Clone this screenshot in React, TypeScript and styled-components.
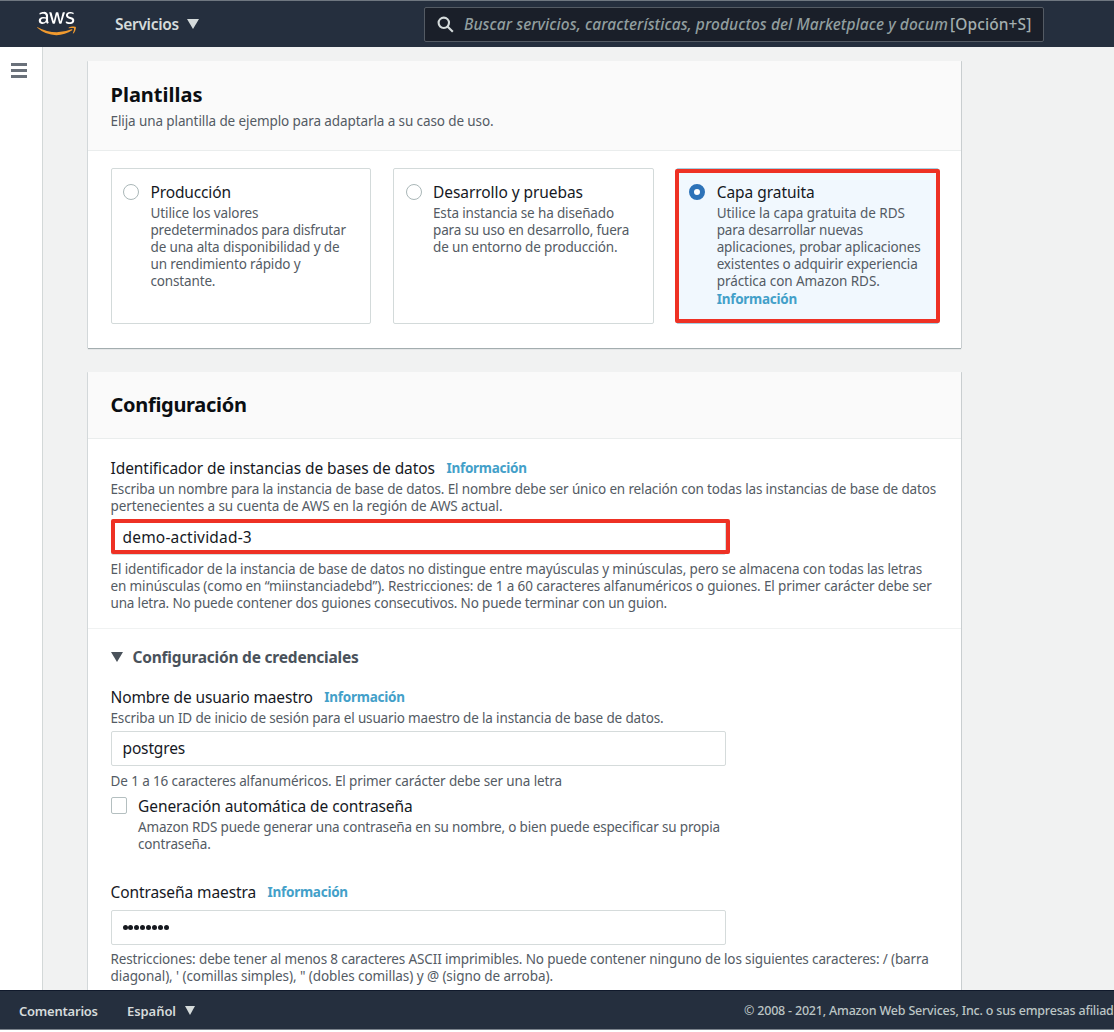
import React from "react";
import styled, { createGlobalStyle } from "styled-components";
import { FaAws } from "react-icons/fa6";

const GlobalStyle = createGlobalStyle`
  * { box-sizing: border-box; }
  body {
    margin: 0;
    background: #fff;
    font-family: "Noto Sans", "Open Sans", sans-serif;
    overflow: hidden;
  }
`;

const Page = styled.div`
  display: flex;
  flex-direction: column;
  width: 1114px;
  height: 1032px;
  overflow: hidden;
`;

const TopBar = styled.header`
  display: flex;
  align-items: center;
  flex: none;
  height: 47px;
  border-top: 1px solid #6f7780;
  background: #252f3e;
  color: #d5dbdb;
`;

const LogoBox = styled.div`
  width: 39px;
  height: 31px;
  margin: 0 0 1px 37px;
  svg { width: 39px; height: 31px; display: block; }
  svg path { fill: url(#awsInk); }
`;

const GradientDefs = styled.svg`
  width: 0;
  height: 0;
  flex: none;
`;

const Services = styled.div`
  display: flex;
  align-items: center;
  gap: 8px;
  width: 309px;
  margin-left: 39px;
  font-size: 15.5px;
  font-weight: 600;
  letter-spacing: -0.3px;
  line-height: 22px;
`;

const Caret = styled.i<{ $w: number; $h: number; $color: string }>`
  width: 0;
  height: 0;
  border-left: ${(p) => p.$w / 2}px solid transparent;
  border-right: ${(p) => p.$w / 2}px solid transparent;
  border-top: ${(p) => p.$h}px solid ${(p) => p.$color};
`;

const SearchBox = styled.div`
  display: flex;
  align-items: center;
  width: 620px;
  height: 35px;
  padding: 0 11px 0 12px;
  border: 1px solid #545b64;
  border-radius: 2px;
  background: #1a1f29;
  font-size: 15.5px;
  line-height: 22px;
  font-weight: 500;
  color: #a3aeaf;
  white-space: nowrap;
`;

const SearchGlyph = styled.svg`
  flex: none;
  width: 17px;
  height: 17px;
  margin-right: 10px;
`;

const Placeholder = styled.span`
  width: 486px;
  overflow: hidden;
  font-style: italic;
  letter-spacing: 0.067px;
  color: #919e9f;
`;

const Shortcut = styled.span`
  letter-spacing: 0.1px;
`;

const Middle = styled.div`
  display: flex;
  flex: none;
  height: 943px;
  background: #f1f2f2;
  overflow: hidden;
`;

const Rail = styled.nav`
  width: 43px;
  flex: none;
  background: #fff;
  border-right: 1px solid #d3d8d8;
  padding: 16px 0 0 11px;
`;

const Burger = styled.div`
  display: flex;
  flex-direction: column;
  gap: 3.5px;
  width: 16px;
  span { height: 2.5px; background: #6a717a; }
`;

const Content = styled.main`
  display: flex;
  flex-direction: column;
  gap: 24px;
  width: 873px;
  margin: 14px 0 0 44.5px;
`;

const Card = styled.section<{ $padBottom?: number }>`
  flex: none;
  padding-bottom: ${(p) => p.$padBottom ?? 0}px;
  background: #fff;
  box-shadow: 0 1px 1px #a3adaf, -1px 0 0 #dde1e2, 1px 0 0 #d0d5d6;
`;

const CardHeader = styled.div<{ $height: number; $top: number }>`
  display: flex;
  flex-direction: column;
  gap: 4px;
  height: ${(p) => p.$height}px;
  padding: ${(p) => p.$top}px 23px 0;
  background: #fafafa;
  border-bottom: 1px solid #eaeded;
`;

const Title = styled.h2<{ $ls?: number }>`
  margin: 0;
  font-size: 20px;
  line-height: 28px;
  font-weight: 700;
  color: #0b0e12;
  letter-spacing: ${(p) => p.$ls ?? 0}px;
`;

const Line = styled.div<{ $ls?: number }>`
  height: 17.2px;
  font-size: 13.5px;
  line-height: 17.2px;
  color: #545b64;
  white-space: nowrap;
  letter-spacing: ${(p) => p.$ls ?? -0.15}px;
`;

const Label = styled.div<{ $ls?: number }>`
  display: flex;
  align-items: center;
  gap: 11.5px;
  height: 22px;
  margin-bottom: 1.6px;
  font-size: 15.5px;
  line-height: 22px;
  color: #16191f;
  white-space: nowrap;
  letter-spacing: ${(p) => p.$ls ?? -0.1}px;
`;

const Info = styled.a`
  font-size: 13.5px;
  font-weight: 700;
  letter-spacing: -0.26px;
  color: #43a0c9;
`;

const Tiles = styled.div`
  display: grid;
  grid-template-columns: 260.5px 260.5px 263px;
  gap: 22px;
  height: 197px;
  padding: 17px 23px 24px;
`;

const Tile = styled.div<{ $selected?: boolean }>`
  position: relative;
  display: flex;
  gap: ${(p) => (p.$selected ? 12.2 : 11.4)}px;
  padding: 12px 0 0 ${(p) => (p.$selected ? 12 : 11.6)}px;
  border: 1px solid ${(p) => (p.$selected ? "#a5cfe2" : "#d3dada")};
  border-radius: 2px;
  background: ${(p) => (p.$selected ? "#f1f8fe" : "#fff")};
`;

const Radio = styled.span<{ $on?: boolean }>`
  flex: none;
  width: 16px;
  height: 16px;
  margin-top: 3px;
  border-radius: 50%;
  border: ${(p) => (p.$on ? "5px solid #2e73b8" : "1px solid #aab7b8")};
  background: #fff;
`;

const Highlight = styled.div<{ $box: string }>`
  position: absolute;
  inset: ${(p) => p.$box};
  border: 4px solid #ee3124;
  border-radius: 2px;
  pointer-events: none;
`;

const Section = styled.div<{ $top: number; $height?: number; $rule?: boolean }>`
  padding: ${(p) => p.$top}px 23px 0;
  height: ${(p) => (p.$height ? p.$height + "px" : "auto")};
  border-bottom: ${(p) => (p.$rule ? "1px solid #f0f2f2" : "none")};
`;

const Input = styled.div<{ $gapTop: number; $gapBottom: number; $ls: number }>`
  position: relative;
  width: 615px;
  height: 35px;
  margin: ${(p) => p.$gapTop}px 0 ${(p) => p.$gapBottom}px;
  padding-left: 11px;
  border: 1px solid #d5dbdb;
  border-radius: 2px;
  background: #fff;
  font-size: 15.5px;
  line-height: 32.6px;
  color: #16191f;
  letter-spacing: ${(p) => p.$ls}px;
`;

const Dots = styled.div`
  display: flex;
  align-items: center;
  gap: 0.9px;
  height: 33px;
  i { width: 5px; height: 5px; border-radius: 50%; background: #16191f; }
`;

const Expander = styled.div`
  display: flex;
  align-items: center;
  gap: 10px;
  height: 22px;
  margin-bottom: 18px;
  font-size: 15.5px;
  font-weight: 700;
  letter-spacing: -0.21px;
  color: #4a525b;
`;

const CheckRow = styled.div`
  display: flex;
  gap: 11.5px;
  margin: 5px 0 28.5px;
`;

const CheckBox = styled.span`
  flex: none;
  width: 16px;
  height: 17px;
  margin-top: 2px;
  border: 1px solid #b4bfc0;
  border-radius: 2px;
`;

const Footer = styled.footer`
  display: flex;
  align-items: center;
  flex: none;
  height: 40px;
  padding: 1px 0 0 19px;
  background: #252f3e;
  border-top: 1px solid #10192b;
  border-bottom: 1px solid #7a828b;
  font-size: 13px;
  font-weight: 600;
  line-height: 18px;
  color: #d5dbdb;
  white-space: nowrap;
  overflow: hidden;
`;

const FooterItem = styled.span<{ $w: number; $ls: number }>`
  display: flex;
  align-items: center;
  gap: 9px;
  flex: none;
  width: ${(p) => p.$w}px;
  letter-spacing: ${(p) => p.$ls}px;
`;

const Legal = styled.span`
  font-size: 12.5px;
  font-weight: 500;
  letter-spacing: -0.2px;
  color: #bcc5c5;
`;

const infoLink = <Info>Información</Info>;

export default function App() {
  return (
    <Page>
      <GlobalStyle />
      <TopBar>
        <GradientDefs aria-hidden="true">
          <defs>
            <linearGradient id="awsInk" gradientUnits="userSpaceOnUse" x1="0" y1="0" x2="0" y2="512">
              <stop offset="0.585" stopColor="#fff" />
              <stop offset="0.585" stopColor="#f19a2e" />
            </linearGradient>
          </defs>
        </GradientDefs>
        <LogoBox>
          <FaAws />
        </LogoBox>
        <Services>
          <span>Servicios</span>
          <Caret $w={12} $h={10} $color="#d5dbdb" />
        </Services>
        <SearchBox>
          <SearchGlyph viewBox="0 0 17 17" fill="none" stroke="#d5dbdb" strokeWidth="2.1">
            <circle cx="6.8" cy="6.8" r="5.2" />
            <path d="M10.5 10.5 L15.8 15.8" />
          </SearchGlyph>
          <Placeholder>Buscar servicios, características, productos del Marketplace y docum</Placeholder>
          <Shortcut>[Opción+S]</Shortcut>
        </SearchBox>
      </TopBar>

      <Middle>
        <Rail>
          <Burger><span /><span /><span /></Burger>
        </Rail>
        <Content>
          <Card>
            <CardHeader $height={90} $top={20}>
              <Title>Plantillas</Title>
              <Line $ls={-0.1}>Elija una plantilla de ejemplo para adaptarla a su caso de uso.</Line>
            </CardHeader>
            <Tiles>
              <Tile>
                <Radio />
                <div>
                  <Label $ls={-0.14}>Producción</Label>
                  <Line $ls={-0.1}>Utilice los valores</Line>
                  <Line $ls={-0.18}>predeterminados para disfrutar</Line>
                  <Line>de una alta disponibilidad y de</Line>
                  <Line>un rendimiento rápido y</Line>
                  <Line>constante.</Line>
                </div>
              </Tile>
              <Tile>
                <Radio />
                <div>
                  <Label $ls={-0.065}>Desarrollo y pruebas</Label>
                  <Line>Esta instancia se ha diseñado</Line>
                  <Line $ls={-0.16}>para su uso en desarrollo, fuera</Line>
                  <Line>de un entorno de producción.</Line>
                </div>
              </Tile>
              <Tile $selected>
                <Radio $on />
                <div>
                  <Label $ls={-0.04}>Capa gratuita</Label>
                  <Line $ls={-0.05}>Utilice la capa gratuita de RDS</Line>
                  <Line>para desarrollar nuevas</Line>
                  <Line>aplicaciones, probar aplicaciones</Line>
                  <Line $ls={-0.17}>existentes o adquirir experiencia</Line>
                  <Line $ls={-0.06}>práctica con Amazon RDS.</Line>
                  <Line>{infoLink}</Line>
                </div>
                <Highlight $box="0 -2px 0 -2px" />
              </Tile>
            </Tiles>
          </Card>

          <Card $padBottom={30}>
            <CardHeader $height={67} $top={19}>
              <Title $ls={-0.3}>Configuración</Title>
            </CardHeader>
            <Section $top={18} $height={190} $rule>
              <Label $ls={-0.065}>Identificador de instancias de bases de datos {infoLink}</Label>
              <Line $ls={-0.14}>Escriba un nombre para la instancia de base de datos. El nombre debe ser único en relación con todas las instancias de base de datos</Line>
              <Line $ls={-0.085}>pertenecientes a su cuenta de AWS en la región de AWS actual.</Line>
              <Input $gapTop={5} $gapBottom={6} $ls={0.19}>
                demo-actividad-3
                <Highlight $box="-2px -5px 0 -1px" />
              </Input>
              <Line $ls={-0.122}>El identificador de la instancia de base de datos no distingue entre mayúsculas y minúsculas, pero se almacena con todas las letras</Line>
              <Line $ls={-0.123}>en minúsculas (como en “miinstanciadebd”). Restricciones: de 1 a 60 caracteres alfanuméricos o guiones. El primer carácter debe ser</Line>
              <Line $ls={-0.17}>una letra. No puede contener dos guiones consecutivos. No puede terminar con un guion.</Line>
            </Section>
            <Section $top={17}>
              <Expander>
                <Caret $w={12} $h={10} $color="#4a525b" />
                Configuración de credenciales
              </Expander>
              <Label $ls={-0.14}>Nombre de usuario maestro {infoLink}</Label>
              <Line $ls={-0.152}>Escriba un ID de inicio de sesión para el usuario maestro de la instancia de base de datos.</Line>
              <Input $gapTop={4.4} $gapBottom={6.6} $ls={-0.15}>postgres</Input>
              <Line $ls={-0.115}>De 1 a 16 caracteres alfanuméricos. El primer carácter debe ser una letra</Line>
              <CheckRow>
                <CheckBox />
                <div>
                  <Label $ls={-0.075}>Generación automática de contraseña</Label>
                  <Line $ls={-0.165}>Amazon RDS puede generar una contraseña en su nombre, o bien puede especificar su propia</Line>
                  <Line>contraseña.</Line>
                </div>
              </CheckRow>
              <Label $ls={-0.1}>Contraseña maestra {infoLink}</Label>
              <Input $gapTop={6.4} $gapBottom={6} $ls={0}>
                <Dots>{Array.from({ length: 8 }, (_, i) => <i key={i} />)}</Dots>
              </Input>
              <Line $ls={-0.14}>Restricciones: debe tener al menos 8 caracteres ASCII imprimibles. No puede contener ninguno de los siguientes caracteres: / (barra</Line>
              <Line $ls={-0.075}>diagonal), ' (comillas simples), " (dobles comillas) y @ (signo de arroba).</Line>
            </Section>
          </Card>
        </Content>
      </Middle>

      <Footer>
        <FooterItem $w={108} $ls={-0.23}>Comentarios</FooterItem>
        <FooterItem $w={617} $ls={-0.06}>
          Español
          <Caret $w={11} $h={9} $color="#d5dbdb" />
        </FooterItem>
        <Legal>© 2008 - 2021, Amazon Web Services, Inc. o sus empresas afiliad</Legal>
      </Footer>
    </Page>
  );
}
